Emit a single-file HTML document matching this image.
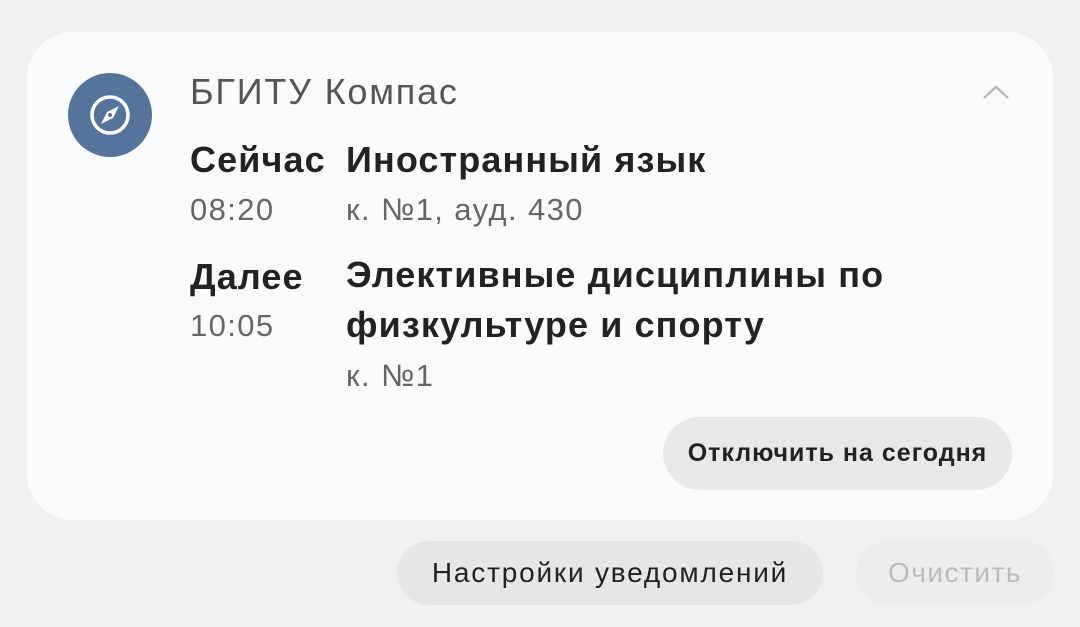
<!DOCTYPE html>
<html><head><meta charset="utf-8"><style>
body{margin:0;width:1080px;height:627px;background:#eef0f2;font-family:"Liberation Sans",sans-serif;position:relative;overflow:hidden}
.card{position:absolute;left:27px;top:32px;width:1026px;height:488px;background:#f9fafb;border-radius:46px}
.t{position:absolute;white-space:nowrap}
.b{font-weight:bold;color:#222;font-size:36px;letter-spacing:1.1px}
.g{color:#666;font-size:31px;letter-spacing:1.4px}
.btn{position:absolute;border-radius:40px;display:flex;align-items:center;justify-content:center}
</style></head><body>
<div class="card"></div>
<svg style="position:absolute;left:68px;top:73px" width="84" height="84" viewBox="0 0 84 84">
<circle cx="42" cy="42" r="42" fill="#56739c"/>
<circle cx="42" cy="42" r="18" fill="none" stroke="#fff" stroke-width="3.5"/>
<path d="M51 33 L45 45 L33 51 L39 39 Z" fill="#fff"/>
<circle cx="42" cy="42" r="2" fill="#56739c"/>
</svg>
<div class="t" style="left:190px;top:71px;font-size:36px;color:#555;letter-spacing:1.8px">БГИТУ Компас</div>
<svg style="position:absolute;left:982px;top:84px" width="28" height="16"><path d="M2 14 L14 3 L26 14" fill="none" stroke="#bbb" stroke-width="2.5"/></svg>
<div class="t b" style="left:190px;top:139px">Сейчас</div>
<div class="t b" style="left:346px;top:139px">Иностранный язык</div>
<div class="t g" style="left:190px;top:192px">08:20</div>
<div class="t g" style="left:346px;top:192px">к. №1, ауд. 430</div>
<div class="t b" style="left:190px;top:256px">Далее</div>
<div class="t b" style="left:346px;line-height:50px;top:250px">Элективные дисциплины по<br>физкультуре и спорту</div>
<div class="t g" style="left:190px;top:308px">10:05</div>
<div class="t g" style="left:346px;top:358px">к. №1</div>
<div class="btn" style="left:663px;top:417px;width:349px;height:73px;background:#e8e8e8;font-weight:bold;font-size:25px;letter-spacing:1px;color:#222">Отключить на сегодня</div>
<div class="btn" style="left:397px;top:541px;width:426px;height:64px;background:#e6e6e6;font-size:28px;letter-spacing:1.8px;color:#222">Настройки уведомлений</div>
<div class="btn" style="left:856px;top:541px;width:198px;height:64px;background:#ececec;font-size:28px;letter-spacing:1.5px;color:#bbb">Очистить</div>
</body></html>
